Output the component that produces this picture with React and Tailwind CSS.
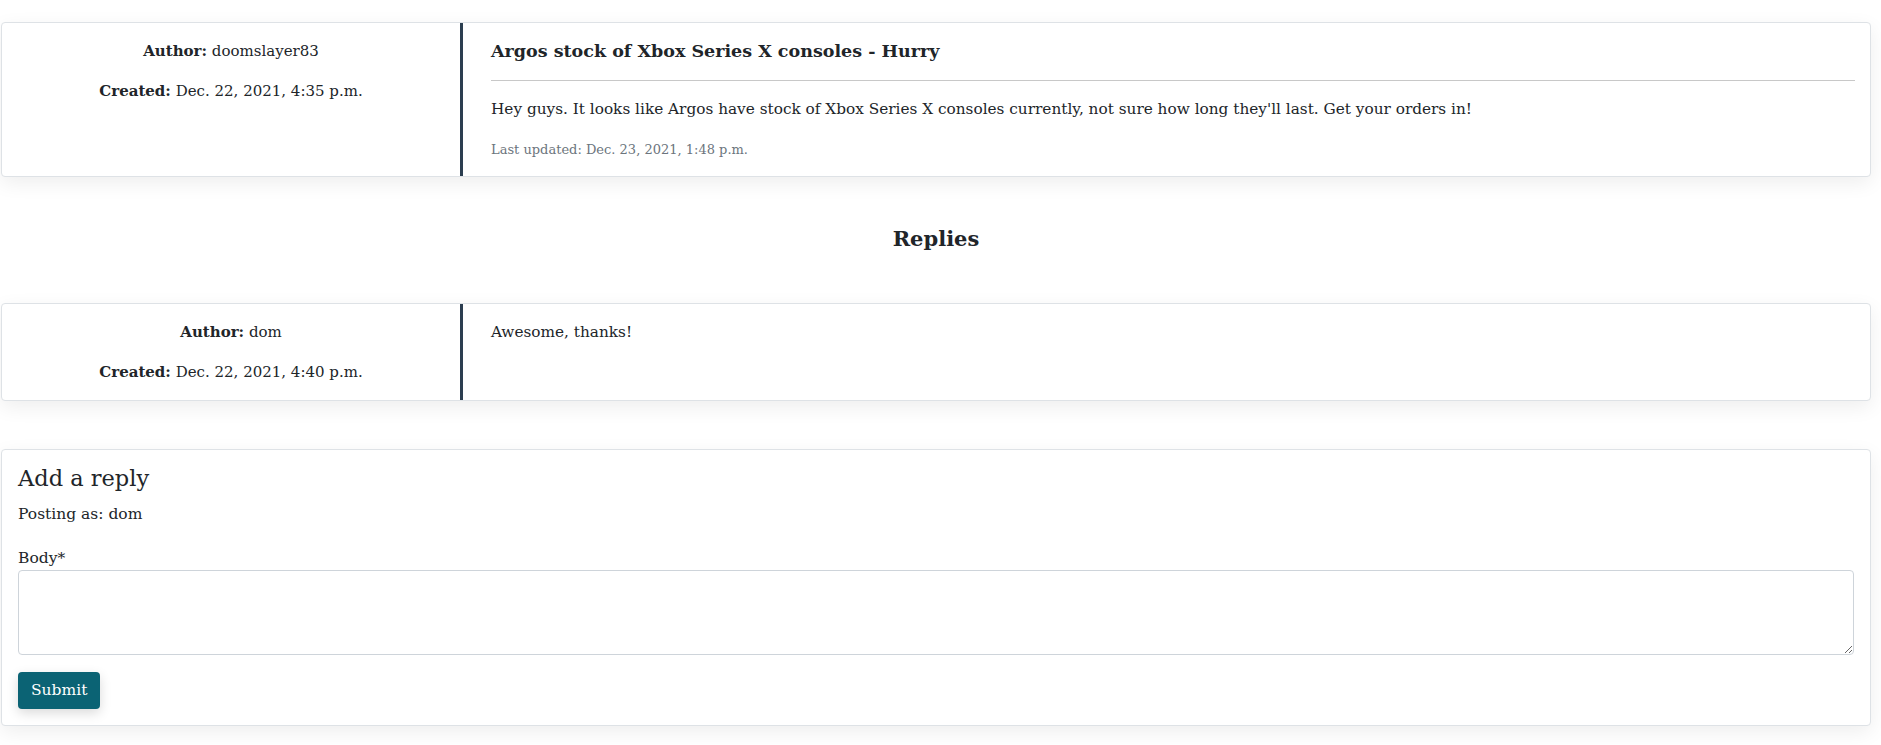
import { useState } from 'react';

const serif = { fontFamily: '"DejaVu Serif", "Liberation Serif", serif' };

function MetaColumn({ author, created }) {
  return (
    <div className="w-[458px] shrink-0 px-4 pt-4 pb-4 text-center text-[15px] leading-6">
      <p className="mb-4">
        <span className="font-bold">Author:</span> {author}
      </p>
      <p>
        <span className="font-bold">Created:</span> {created}
      </p>
    </div>
  );
}

function App() {
  const [body, setBody] = useState('');

  return (
    <div style={serif} className="min-h-screen bg-white text-[#212529]">
      <div className="ml-[1px] w-[1870px] pt-[22px] pb-5">
        <div className="flex border border-[#dee2e6] rounded shadow-[0_6px_20px_rgba(0,0,0,0.07)] bg-white">
          <MetaColumn author="doomslayer83" created="Dec. 22, 2021, 4:35 p.m." />
          <div className="flex-1 border-l-[3px] border-[#2c3e50] pl-[28px] pr-[15px] pt-4 pb-4">
            <h5 className="text-[17.5px] font-bold leading-6">Argos stock of Xbox Series X consoles - Hurry</h5>
            <hr className="mt-[17px] mb-4 border-t border-[#c8c8c8]" />
            <p className="text-[15.3px] leading-6 mb-[18px]">
              Hey guys. It looks like Argos have stock of Xbox Series X consoles currently, not sure how long they'll last. Get your orders in!
            </p>
            <p className="text-[13px] leading-[21px] text-[#6c757d]">Last updated: Dec. 23, 2021, 1:48 p.m.</p>
          </div>
        </div>

        <h3 className="text-center text-[21px] font-bold leading-[30px] mt-[47px] mb-[49px]">Replies</h3>

        <div className="flex border border-[#dee2e6] rounded shadow-[0_6px_20px_rgba(0,0,0,0.07)] bg-white">
          <MetaColumn author="dom" created="Dec. 22, 2021, 4:40 p.m." />
          <div className="flex-1 border-l-[3px] border-[#2c3e50] pl-[28px] pr-4 pt-4 pb-4">
            <p className="text-[15.3px] leading-6">Awesome, thanks!</p>
          </div>
        </div>

        <div className="mt-[48px] border border-[#dee2e6] rounded shadow-[0_6px_20px_rgba(0,0,0,0.07)] bg-white px-4 pt-[14px] pb-4">
          <h4 className="text-[22.5px] leading-[29px] mb-[9px]">Add a reply</h4>
          <p className="text-[15.5px] leading-6 mb-5">Posting as: dom</p>
          <form onSubmit={(e) => e.preventDefault()}>
            <label htmlFor="body" className="block text-[15.5px] leading-6">Body*</label>
            <textarea
              id="body"
              value={body}
              onChange={(e) => setBody(e.target.value)}
              className="block w-full h-[85px] border border-[#ced4da] rounded bg-white px-3 py-1.5 text-[15px]"
            />
            <button
              type="submit"
              className="mt-[17px] h-[37px] px-[13px] rounded bg-[#0b6374] text-white text-[15.5px] shadow-[0_4px_12px_rgba(0,0,0,0.15)]"
            >
              Submit
            </button>
          </form>
        </div>
      </div>
    </div>
  );
}

export default App;
